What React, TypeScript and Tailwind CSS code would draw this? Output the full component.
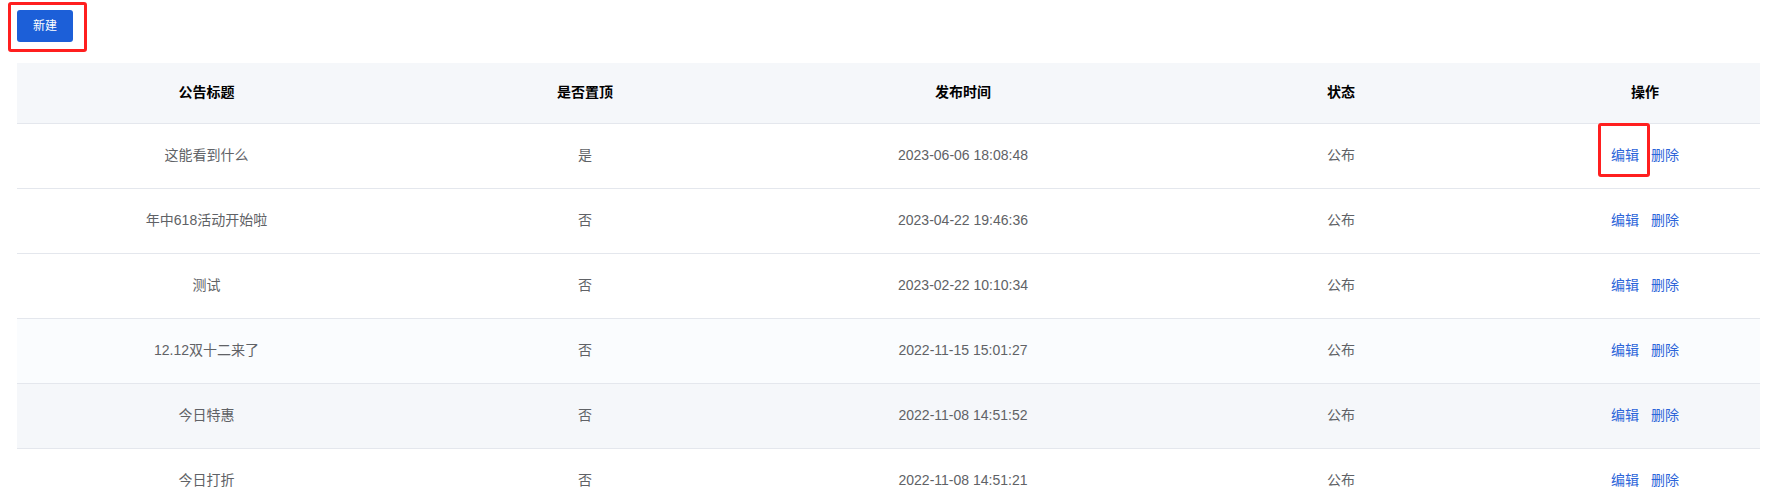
const rows = [
  { title: "这能看到什么", top: "是", time: "2023-06-06 18:08:48", status: "公布", bg: "bg-white" },
  { title: "年中618活动开始啦", top: "否", time: "2023-04-22 19:46:36", status: "公布", bg: "bg-white" },
  { title: "测试", top: "否", time: "2023-02-22 10:10:34", status: "公布", bg: "bg-white" },
  { title: "12.12双十二来了", top: "否", time: "2022-11-15 15:01:27", status: "公布", bg: "bg-[#fafcfe]" },
  { title: "今日特惠", top: "否", time: "2022-11-08 14:51:52", status: "公布", bg: "bg-[#f5f7fa]" },
  { title: "今日打折", top: "否", time: "2022-11-08 14:51:21", status: "公布", bg: "bg-white" },
];

export default function App() {
  return (
    <div
      className="relative min-h-screen bg-white pl-[17px] pt-[10px]"
      style={{ fontFamily: '"Liberation Sans", "Noto Sans CJK SC", sans-serif' }}
    >
      {/* toolbar */}
      <div className="relative h-8">
        <button className="h-8 w-14 rounded-[3px] bg-[#1c5fd8] text-[12px] text-white">
          新建
        </button>
        {/* annotation box */}
        <div className="pointer-events-none absolute left-[-9px] top-[-8px] h-[50px] w-[79px] rounded-[3px] border-[3px] border-[#ff1f1f]" />
      </div>

      <table className="mt-[21px] w-[1743px] table-fixed border-collapse text-[14px]">
        <colgroup>
          <col className="w-[379px]" />
          <col className="w-[378px]" />
          <col className="w-[378px]" />
          <col className="w-[378px]" />
          <col className="w-[230px]" />
        </colgroup>
        <thead>
          <tr className="h-[60px] border-b border-[#e4e7ed] bg-[#f5f7fa]">
            <th className="font-bold text-black">公告标题</th>
            <th className="font-bold text-black">是否置顶</th>
            <th className="font-bold text-black">发布时间</th>
            <th className="font-bold text-black">状态</th>
            <th className="font-bold text-black">操作</th>
          </tr>
        </thead>
        <tbody>
          {rows.map((r, i) => (
            <tr key={i} className={`h-[65px] border-b border-[#e4e7ed] ${r.bg}`}>
              <td className="text-center text-[#606266]">{r.title}</td>
              <td className="text-center text-[#606266]">{r.top}</td>
              <td className="text-center text-[#606266]">{r.time}</td>
              <td className="text-center text-[#606266]">{r.status}</td>
              <td className="text-center">
                <div className="relative inline-flex gap-3 text-[#2b64d9]">
                  <a className="cursor-pointer">编辑</a>
                  <a className="cursor-pointer">删除</a>
                  {i === 0 && (
                    <div className="pointer-events-none absolute left-[-13px] top-[-22px] h-[54px] w-[52px] rounded-[3px] border-[3px] border-[#ff1f1f]" />
                  )}
                </div>
              </td>
            </tr>
          ))}
        </tbody>
      </table>
    </div>
  );
}
